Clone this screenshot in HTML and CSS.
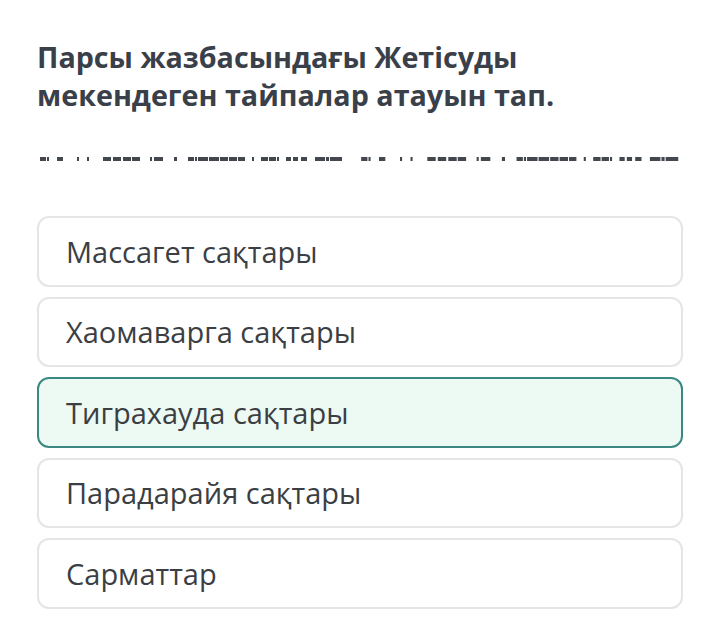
FILE: index.html
```html
<!DOCTYPE html>
<html lang="kk">
<head>
    <meta charset="UTF-8">
    <meta name="viewport" content="width=device-width, initial-scale=1.0">
    <title>Сұрақ</title>
    <link rel="stylesheet" href="styles.css">
</head>
<body>
    <div class="quiz">
        <h1 class="question">Парсы жазбасындағы Жетісуды мекендеген тайпалар атауын тап.</h1>

        <div class="hint">
            <svg width="646" height="4" viewBox="0 0 646 4">
                <g id="hint-half" fill="#43484e">
                    <rect x="3" y="0" width="6" height="4"/>
                    <rect x="10" y="0" width="2" height="4"/>
                    <rect x="20" y="0" width="6" height="4"/>
                    <rect x="40" y="0" width="2" height="4"/>
                    <rect x="50" y="0" width="2" height="4"/>
                    <rect x="66" y="0" width="8" height="4"/>
                    <rect x="76" y="0" width="8" height="4"/>
                    <rect x="86" y="0" width="8" height="4"/>
                    <rect x="95" y="0" width="8" height="4"/>
                    <rect x="113" y="0" width="2" height="4"/>
                    <rect x="117" y="0" width="9" height="4"/>
                    <rect x="137" y="0" width="3" height="4"/>
                    <rect x="151" y="0" width="6" height="4"/>
                    <rect x="158" y="0" width="2" height="4"/>
                    <rect x="161" y="0" width="10" height="4"/>
                    <rect x="172" y="0" width="10" height="4"/>
                    <rect x="183" y="0" width="8" height="4"/>
                    <rect x="192" y="0" width="8" height="4"/>
                    <rect x="201" y="0" width="7" height="4"/>
                    <rect x="215" y="0" width="2" height="4"/>
                    <rect x="224" y="0" width="7" height="4"/>
                    <rect x="232" y="0" width="7" height="4"/>
                    <rect x="240" y="0" width="2" height="4"/>
                    <rect x="249" y="0" width="5" height="4"/>
                    <rect x="256" y="0" width="5" height="4"/>
                    <rect x="264" y="0" width="6" height="4"/>
                    <rect x="278" y="0" width="10" height="4"/>
                    <rect x="289" y="0" width="3" height="4"/>
                    <rect x="293" y="0" width="12" height="4"/>
                </g>
                <use href="#hint-half" transform="translate(321 0) scale(1.05 1)"/>
            </svg>
        </div>

        <div class="options">
            <div class="option">Массагет сақтары</div>
            <div class="option">Хаомаварга сақтары</div>
            <div class="option selected">Тиграхауда сақтары</div>
            <div class="option">Парадарайя сақтары</div>
            <div class="option">Сарматтар</div>
        </div>
    </div>
</body>
</html>
```

FILE: styles.css
```css
body {
    margin: 0;
    background: #ffffff;
    font-family: "Open Sans", "Noto Sans", sans-serif;
}

.quiz {
    padding: 38px 26px 0 37px;
}

.question {
    margin: 0;
    font-size: 28.7px;
    line-height: 38px;
    font-weight: 700;
    color: #3a4049;
    max-width: 560px;
}

.hint {
    margin-top: 41px;
    height: 4px;
    line-height: 0;
}

.options {
    margin-top: 57px;
    display: flex;
    flex-direction: column;
    gap: 10px;
}

.option {
    height: 66.5px;
    display: flex;
    align-items: center;
    padding-left: 27px;
    border: 2px solid #e3e5e6;
    border-radius: 12px;
    font-size: 29px;
    color: #3b3f44;
}

.option.selected {
    background: #edfaf3;
    border-color: #3b8880;
}
```
